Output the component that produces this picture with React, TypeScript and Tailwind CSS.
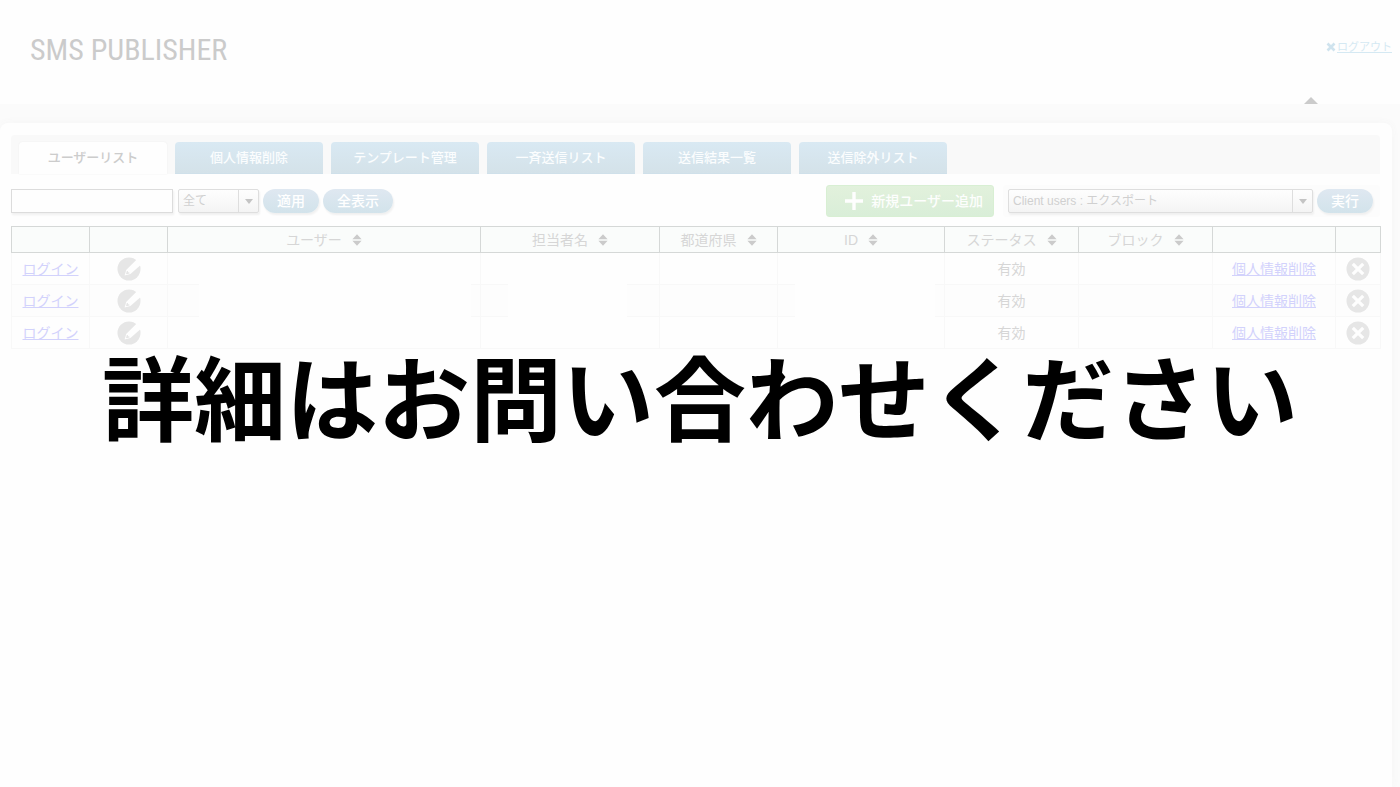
import React, { useState } from 'react';

const tabs = ['ユーザーリスト', '個人情報削除', 'テンプレート管理', '一斉送信リスト', '送信結果一覧', '送信除外リスト'];

const columns = [
  { label: '', width: 'w-[78px]' },
  { label: '', width: 'w-[78px]' },
  { label: 'ユーザー', width: 'w-[313px]' },
  { label: '担当者名', width: 'w-[179px]' },
  { label: '都道府県', width: 'w-[118px]' },
  { label: 'ID', width: 'w-[167px]' },
  { label: 'ステータス', width: 'w-[134px]' },
  { label: 'ブロック', width: 'w-[134px]' },
  { label: '', width: 'w-[123px]' },
  { label: '', width: 'w-[45px]' },
];

const users = [
  { id: 1, status: '有効' },
  { id: 2, status: '有効' },
  { id: 3, status: '有効' },
];

const SortIcon: React.FC = () => (
  <svg viewBox="0 0 10 12" className="w-[10px] h-3 fill-[#cbcbcb]" aria-hidden="true">
    <path d="M5 0.3 9.6 5.3H0.4zM0.4 6.7h9.2L5 11.7z" />
  </svg>
);

const EditIcon: React.FC = () => (
  <svg viewBox="0 0 24 24" className="w-6 h-6" aria-hidden="true">
    <circle cx="12" cy="12" r="11.5" fill="#e6e6e6" />
    <path d="M7.6 18.6 9.2 13 20 2.2 25 7 13.4 17z" fill="#fefefe" />
    <path d="M9.9 13.9 10.8 14 11.1 15.3 12.4 15.6 12.5 16.4 9.4 17.2 9 16.8z" fill="#e6e6e6" />
  </svg>
);

const DeleteIcon: React.FC = () => (
  <svg viewBox="0 0 24 24" className="w-6 h-6" aria-hidden="true">
    <circle cx="12" cy="12" r="11.5" fill="#e6e6e6" />
    <path d="M6.8 6.8 17.2 17.2M17.2 6.8 6.8 17.2" stroke="#fefefe" strokeWidth="3.2" />
  </svg>
);

const SelectArrow: React.FC = () => (
  <span className="pointer-events-none absolute inset-y-0 right-0 flex w-[21px] items-center justify-center border-l border-[#dedede]">
    <svg viewBox="0 0 8 5" className="w-2 h-[5px] fill-[#c4c4c4]" aria-hidden="true">
      <path d="M0 0h8L4 5z" />
    </svg>
  </span>
);

const pillClass =
  'h-6 rounded-full bg-linear-to-b from-[#dfe8f1] to-[#d2e3eb] px-[14px] text-sm leading-6 font-medium text-white shadow-[1px_2px_2px_#f0f0f0]';
const selectClass =
  'block h-6 w-full appearance-none rounded-[2px] border border-[#dedede] bg-linear-to-b from-[#fefefe] to-[#f4f4f4] pl-1 text-xs text-[#d0d0d0] shadow-[1px_2px_2px_#f0f0f0] outline-none';

const App: React.FC = () => {
  const [activeTab, setActiveTab] = useState(0);
  const [keyword, setKeyword] = useState('');

  return (
    <div className="relative flex min-h-screen flex-col bg-[#fbfbfb] font-['Liberation_Sans','Noto_Sans_CJK_JP',sans-serif]">
      <header className="flex h-[104px] justify-between bg-[#fefefe] pl-[30px] pr-2">
        <h1 className="pt-[30px] font-['Roboto_Condensed','Liberation_Sans_Narrow',sans-serif] text-[30px] leading-10 text-[#cbcbcb]">
          SMS PUBLISHER
        </h1>
        <div className="flex flex-col items-end justify-between pt-[39px]">
          <a href="#logout" className="flex items-center gap-px text-[11px] leading-4 text-[#d5e9f3]">
            <svg viewBox="0 0 10 10" className="w-[10px] h-[10px]" aria-hidden="true">
              <path d="M1.5 1.5 8.5 8.5M8.5 1.5 1.5 8.5" stroke="#cfe3ee" strokeWidth="2.6" />
            </svg>
            <span className="underline">ログアウト</span>
          </a>
          <button type="button" aria-label="閉じる" className="mr-[74px]">
            <svg viewBox="0 0 14 7" className="block w-[14px] h-[7px] fill-[#cbcbcb]" aria-hidden="true">
              <path d="M7 0 14 7H0z" />
            </svg>
          </button>
        </div>
      </header>

      <main className="mr-2 mt-[19px] flex-1 rounded-t-lg bg-[#fefefe] pl-[11px] pr-3 pt-3 shadow-[0_0_8px_#f5f5f5]">
        <nav className="flex gap-2 rounded-t bg-[#f9f9f9] pl-2 pt-[7px]">
          {tabs.map((tab, i) => (
            <button
              key={tab}
              type="button"
              onClick={() => setActiveTab(i)}
              className={`h-8 w-[148px] rounded-t text-[13px] leading-8 font-medium ${
                i === activeTab
                  ? 'bg-[#fefefe] text-[#cccccc] shadow-[0_0_2px_#eeeeee]'
                  : 'border-b border-[#cfe0ea] bg-linear-to-b from-[#d9e9f3] to-[#d4e2e9] text-[#fbfdfe]'
              }`}
            >
              {tab}
            </button>
          ))}
        </nav>

        <div className="flex items-center justify-between pt-[11px]">
          <form className="flex items-center gap-1" onSubmit={(e) => e.preventDefault()}>
            <input
              type="text"
              aria-label="検索"
              value={keyword}
              onChange={(e) => setKeyword(e.target.value)}
              className="mr-px h-6 w-[162px] border border-[#dcdcdc] bg-[#fefefe] px-1 text-sm text-[#cccccc] shadow-[1px_2px_2px_#f0f0f0] outline-none"
            />
            <div className="relative w-[81px]">
              <select aria-label="絞り込み" className={selectClass}>
                <option>全て</option>
              </select>
              <SelectArrow />
            </div>
            <button type="submit" className={pillClass}>適用</button>
            <button type="button" className={pillClass}>全表示</button>
          </form>

          <div className="flex items-center gap-[9px]">
            <button
              type="button"
              className="flex h-8 items-center gap-2 rounded-[3px] border border-[#d8efd3] bg-linear-to-b from-[#e2f1dc] to-[#d9eed8] pl-[18px] pr-[10px] text-sm font-medium text-[#fdfefd]"
            >
              <svg viewBox="0 0 18 18" className="w-[18px] h-[18px]" aria-hidden="true">
                <path d="M9 0v18M0 9h18" stroke="#fefefe" strokeWidth="3.4" />
              </svg>
              新規ユーザー追加
            </button>
            <div className="flex items-center gap-1 rounded bg-[#fcfcfc] py-1 pl-[5px] pr-[7px]">
              <div className="relative w-[305px]">
                <select aria-label="一括処理" className={selectClass}>
                  <option>Client users : エクスポート</option>
                </select>
                <SelectArrow />
              </div>
              <button type="button" className={pillClass}>実行</button>
            </div>
          </div>
        </div>

        <table className="mt-[9px] w-full table-fixed border-collapse text-center text-sm leading-5 text-[#d6d6d6]">
          <thead>
            <tr className="h-[26px] bg-[#fafcfb]">
              {columns.map((col, i) => (
                <th key={i} className={`${col.width} border border-[#d5d8d7] p-0 font-normal`}>
                  {col.label && (
                    <span className="flex items-center justify-center gap-[10px]">
                      {col.label}
                      <SortIcon />
                    </span>
                  )}
                </th>
              ))}
            </tr>
          </thead>
          <tbody className="[&_td]:border [&_td]:border-[#f8f8f8] [&_td]:p-0">
            {users.map((user, i) => (
              <tr key={user.id} className={`h-8 ${i % 2 === 1 ? 'bg-[#fdfdfd]' : ''}`}>
                <td>
                  <a href="#login" className="text-[#d2d2fc] underline">ログイン</a>
                </td>
                <td>
                  <button type="button" aria-label="編集" className="block mx-auto">
                    <EditIcon />
                  </button>
                </td>
                <td className="relative">
                  {/* 非表示の個人情報 */}
                  {i === 1 && <span className="absolute -inset-y-px left-[31px] right-[9px] bg-[#fefefe]" />}
                </td>
                <td className="relative">
                  {i === 1 && <span className="absolute -inset-y-px left-[27px] right-8 bg-[#fefefe]" />}
                </td>
                <td />
                <td className="relative">
                  {i === 1 && <span className="absolute -inset-y-px left-[17px] right-[9px] bg-[#fefefe]" />}
                </td>
                <td>{user.status}</td>
                <td />
                <td>
                  <a href="#privacy" className="text-[#d2d2fc] underline">個人情報削除</a>
                </td>
                <td>
                  <button type="button" aria-label="削除" className="block mx-auto">
                    <DeleteIcon />
                  </button>
                </td>
              </tr>
            ))}
          </tbody>
        </table>
      </main>

      <div className="pointer-events-none absolute inset-0 flex items-center justify-center">
        <p className="whitespace-nowrap font-['Noto_Sans_CJK_JP',sans-serif] text-[92px] leading-none font-bold text-black">
          詳細はお問い合わせください
        </p>
      </div>
    </div>
  );
};

export default App;
